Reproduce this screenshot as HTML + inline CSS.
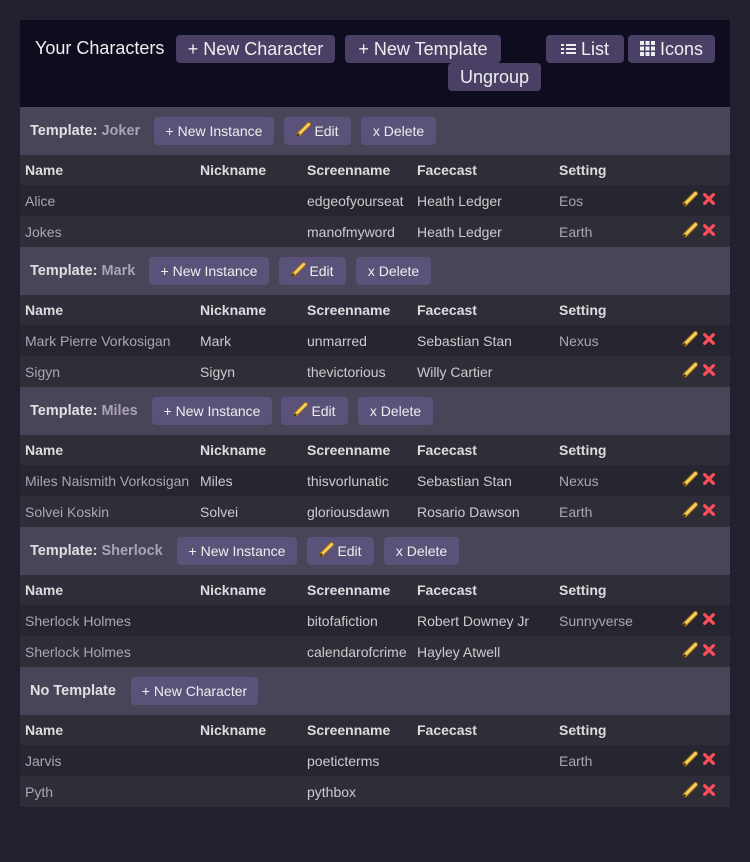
<!DOCTYPE html>
<html><head><meta charset="utf-8"><style>
*{box-sizing:border-box;margin:0;padding:0}
body{width:750px;height:862px;background:#221f2e;font-family:"Liberation Sans",sans-serif;position:relative;overflow:hidden}
.wrap{position:absolute;left:20px;top:20px;width:710px}
.top{height:87px;background:#0e0c1f;position:relative;color:#eee}
.btn{position:absolute;background:#4a4066;color:#eee;border-radius:4px;font-size:18px;height:28px;line-height:29px;text-align:center}
.sh{height:48px;background:#4a4459;position:relative;color:#ddd}
.sh .t{position:absolute;left:10px;top:16px;font-weight:bold;font-size:14.5px;color:#e0e0e0}
.sh .t span{color:#a8a4b2}
.sb{position:absolute;top:10px;height:28px;line-height:29px;background:#5a5278;color:#eee;border-radius:4px;font-size:14px;text-align:center}
.sb svg{vertical-align:-1px;margin-right:3px}
.row{height:31px;position:relative;font-size:14px;color:#aaa7b5;background:#27252f}
.row.alt{background:#2f2d38}
.hd{height:30px;background:#2f2d38;color:#ddd;font-weight:bold}
.row div{position:absolute;top:8px;white-space:nowrap}
.c1{left:5px}.c2{left:180px}.c3{left:287px;color:#ccc}.c4{left:397px;color:#ccc}.c5{left:539px}
.hd div{color:#ddd!important;top:7px}
.row .c2{color:#ccc}
.ic{left:662px;top:6px!important;height:16px}
.ic svg{display:inline-block;vertical-align:top}
</style></head><body>
<svg width="0" height="0" style="position:absolute">
<defs>
<symbol id="p" viewBox="0 0 16 16"><path d="M3 13 L13.5 2.5" stroke="#a06a10" stroke-width="5" stroke-linecap="round"/><path d="M3 13 L13.5 2.5" stroke="#f3d060" stroke-width="3" stroke-linecap="round"/><path d="M1 15 L3.5 12.5" stroke="#4a3410" stroke-width="2"/></symbol>
<symbol id="x" viewBox="0 0 16 16"><path d="M3 3 L13 13 M13 3 L3 13" stroke="#ff4d5a" stroke-width="3.6" stroke-linecap="round"/></symbol>
</defs></svg>
<div class="wrap">
<div class="top">
<div style="position:absolute;left:15px;top:18px;font-size:18px">Your Characters</div>
<div class="btn" style="left:156px;top:15px;width:159px">+ New Character</div>
<div class="btn" style="left:325px;top:15px;width:156px">+ New Template</div>
<div class="btn" style="left:526px;top:15px;width:78px"><svg width="15" height="12" viewBox="0 0 15 12" style="vertical-align:0;margin-right:5px"><g fill="#eee"><rect x="0" y="1" width="3" height="2"/><rect x="5" y="1" width="10" height="2"/><rect x="0" y="5" width="3" height="2"/><rect x="5" y="5" width="10" height="2"/><rect x="0" y="9" width="3" height="2"/><rect x="5" y="9" width="10" height="2"/></g></svg>List</div>
<div class="btn" style="left:608px;top:15px;width:87px"><svg width="15" height="15" viewBox="0 0 15 15" style="vertical-align:-1px;margin-right:5px"><g fill="#eee"><rect x="0" y="0" width="4" height="4"/><rect x="5.5" y="0" width="4" height="4"/><rect x="11" y="0" width="4" height="4"/><rect x="0" y="5.5" width="4" height="4"/><rect x="5.5" y="5.5" width="4" height="4"/><rect x="11" y="5.5" width="4" height="4"/><rect x="0" y="11" width="4" height="4"/><rect x="5.5" y="11" width="4" height="4"/><rect x="11" y="11" width="4" height="4"/></g></svg>Icons</div>
<div class="btn" style="left:428px;top:43px;width:93px">Ungroup</div>
</div>

<div class="sh"><div class="t">Template: <span>Joker</span></div><div class="sb" style="left:134px;width:120px">+ New Instance</div><div class="sb" style="left:264px;width:67px"><svg width="15" height="15"><use href="#p"/></svg>Edit</div><div class="sb" style="left:341px;width:75px">x Delete</div></div>
<div class="row hd"><div class="c1">Name</div><div class="c2">Nickname</div><div class="c3">Screenname</div><div class="c4">Facecast</div><div class="c5">Setting</div></div>
<div class="row"><div class="c1">Alice</div><div class="c3">edgeofyourseat</div><div class="c4">Heath Ledger</div><div class="c5">Eos</div><div class="ic"><svg width="16" height="16"><use href="#p"/></svg><svg width="14" height="14" style="margin-left:4px;margin-top:1px"><use href="#x"/></svg></div></div>
<div class="row alt"><div class="c1">Jokes</div><div class="c3">manofmyword</div><div class="c4">Heath Ledger</div><div class="c5">Earth</div><div class="ic"><svg width="16" height="16"><use href="#p"/></svg><svg width="14" height="14" style="margin-left:4px;margin-top:1px"><use href="#x"/></svg></div></div>

<div class="sh"><div class="t">Template: <span>Mark</span></div><div class="sb" style="left:129px;width:120px">+ New Instance</div><div class="sb" style="left:259px;width:67px"><svg width="15" height="15"><use href="#p"/></svg>Edit</div><div class="sb" style="left:336px;width:75px">x Delete</div></div>
<div class="row hd"><div class="c1">Name</div><div class="c2">Nickname</div><div class="c3">Screenname</div><div class="c4">Facecast</div><div class="c5">Setting</div></div>
<div class="row"><div class="c1">Mark Pierre Vorkosigan</div><div class="c2">Mark</div><div class="c3">unmarred</div><div class="c4">Sebastian Stan</div><div class="c5">Nexus</div><div class="ic"><svg width="16" height="16"><use href="#p"/></svg><svg width="14" height="14" style="margin-left:4px;margin-top:1px"><use href="#x"/></svg></div></div>
<div class="row alt"><div class="c1">Sigyn</div><div class="c2">Sigyn</div><div class="c3">thevictorious</div><div class="c4">Willy Cartier</div><div class="ic"><svg width="16" height="16"><use href="#p"/></svg><svg width="14" height="14" style="margin-left:4px;margin-top:1px"><use href="#x"/></svg></div></div>

<div class="sh"><div class="t">Template: <span>Miles</span></div><div class="sb" style="left:132px;width:120px">+ New Instance</div><div class="sb" style="left:261px;width:67px"><svg width="15" height="15"><use href="#p"/></svg>Edit</div><div class="sb" style="left:338px;width:75px">x Delete</div></div>
<div class="row hd"><div class="c1">Name</div><div class="c2">Nickname</div><div class="c3">Screenname</div><div class="c4">Facecast</div><div class="c5">Setting</div></div>
<div class="row"><div class="c1">Miles Naismith Vorkosigan</div><div class="c2">Miles</div><div class="c3">thisvorlunatic</div><div class="c4">Sebastian Stan</div><div class="c5">Nexus</div><div class="ic"><svg width="16" height="16"><use href="#p"/></svg><svg width="14" height="14" style="margin-left:4px;margin-top:1px"><use href="#x"/></svg></div></div>
<div class="row alt"><div class="c1">Solvei Koskin</div><div class="c2">Solvei</div><div class="c3">gloriousdawn</div><div class="c4">Rosario Dawson</div><div class="c5">Earth</div><div class="ic"><svg width="16" height="16"><use href="#p"/></svg><svg width="14" height="14" style="margin-left:4px;margin-top:1px"><use href="#x"/></svg></div></div>

<div class="sh"><div class="t">Template: <span>Sherlock</span></div><div class="sb" style="left:157px;width:120px">+ New Instance</div><div class="sb" style="left:287px;width:67px"><svg width="15" height="15"><use href="#p"/></svg>Edit</div><div class="sb" style="left:364px;width:75px">x Delete</div></div>
<div class="row hd"><div class="c1">Name</div><div class="c2">Nickname</div><div class="c3">Screenname</div><div class="c4">Facecast</div><div class="c5">Setting</div></div>
<div class="row"><div class="c1">Sherlock Holmes</div><div class="c3">bitofafiction</div><div class="c4">Robert Downey Jr</div><div class="c5">Sunnyverse</div><div class="ic"><svg width="16" height="16"><use href="#p"/></svg><svg width="14" height="14" style="margin-left:4px;margin-top:1px"><use href="#x"/></svg></div></div>
<div class="row alt"><div class="c1">Sherlock Holmes</div><div class="c3">calendarofcrime</div><div class="c4">Hayley Atwell</div><div class="ic"><svg width="16" height="16"><use href="#p"/></svg><svg width="14" height="14" style="margin-left:4px;margin-top:1px"><use href="#x"/></svg></div></div>

<div class="sh"><div class="t">No Template</div><div class="sb" style="left:111px;width:127px">+ New Character</div></div>
<div class="row hd"><div class="c1">Name</div><div class="c2">Nickname</div><div class="c3">Screenname</div><div class="c4">Facecast</div><div class="c5">Setting</div></div>
<div class="row"><div class="c1">Jarvis</div><div class="c3">poeticterms</div><div class="c5">Earth</div><div class="ic"><svg width="16" height="16"><use href="#p"/></svg><svg width="14" height="14" style="margin-left:4px;margin-top:1px"><use href="#x"/></svg></div></div>
<div class="row alt"><div class="c1">Pyth</div><div class="c3">pythbox</div><div class="ic"><svg width="16" height="16"><use href="#p"/></svg><svg width="14" height="14" style="margin-left:4px;margin-top:1px"><use href="#x"/></svg></div></div>
</div>
</body></html>
